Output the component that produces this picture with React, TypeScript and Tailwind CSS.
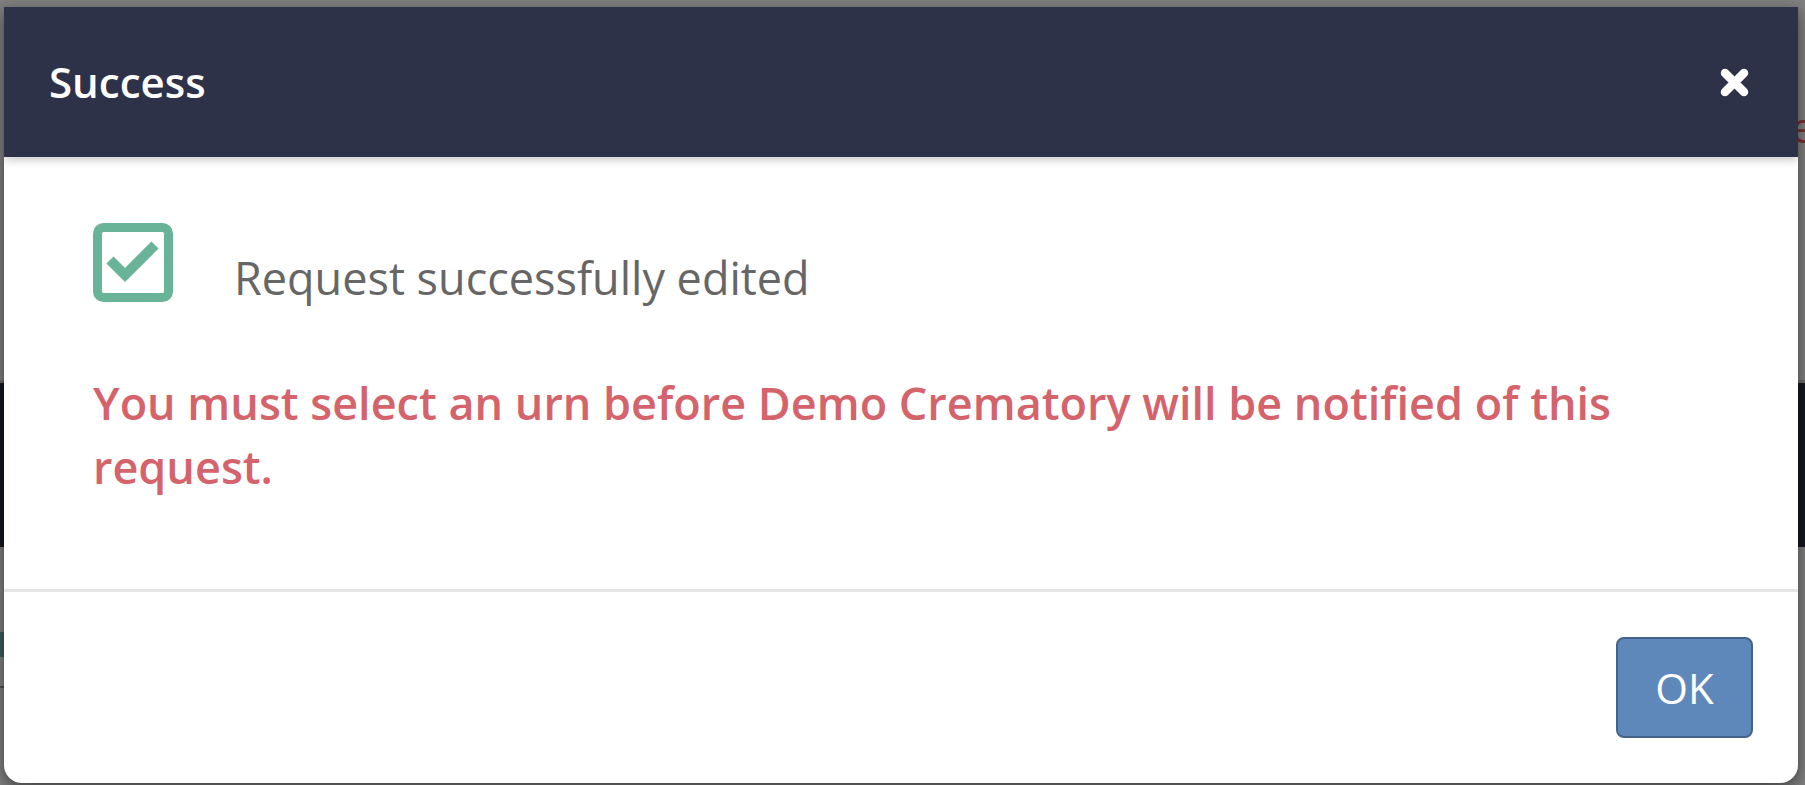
import React from "react";

const font = { fontFamily: '"Open Sans", "Noto Sans", sans-serif' };

const CheckSquare: React.FC = () => (
  <svg width="80" height="80" viewBox="0 0 80 80" className="shrink-0">
    <rect x="4.5" y="4.5" width="71" height="70" rx="6" fill="none" stroke="#69b398" strokeWidth="9" />
    <polyline points="17,37 32,52 62,22" fill="none" stroke="#69b398" strokeWidth="10" strokeLinejoin="miter" />
  </svg>
);

const CloseIcon: React.FC = () => (
  <svg width="31" height="31" viewBox="0 0 31 31">
    <path d="M6 6 L25 25 M25 6 L6 25" stroke="#fff" strokeWidth="8.5" strokeLinecap="round" />
  </svg>
);

const App: React.FC = () => {
  return (
    <div className="relative w-[1805px] h-[785px] bg-[#7f7f7f] overflow-hidden" style={font}>
      {/* dimmed page behind the modal */}
      <div className="absolute left-0 top-[380px] w-full h-[3px] bg-[#6c6c6c]" />
      <div className="absolute left-0 top-[383px] w-full h-[164px] bg-[#15171f]" />
      <div className="absolute left-0 top-[632px] w-[4px] h-[25px] bg-[#3e5e5f]" />
      <div className="absolute left-0 top-[686px] w-[4px] h-[2px] bg-[#4e4e4e]" />
      <div className="absolute left-[1791px] top-[97px] text-[42px] leading-[60px] text-[#7b2f2f]" aria-hidden="true">e</div>

      {/* modal */}
      <div className="absolute left-[4px] top-[7px] w-[1794px] h-[776px] bg-white rounded-b-[18px] shadow-[0_5px_15px_rgba(0,0,0,0.5)] flex flex-col overflow-hidden">
        <div className="relative z-10 h-[150px] bg-[#2e3249] px-[45px] flex items-center justify-between shadow-[0_4px_8px_rgba(0,0,0,0.18)]">
          <h4 className="text-[42px] leading-[60px] font-semibold text-white">Success</h4>
          <button className="mr-[3px] flex items-center">
            <CloseIcon />
          </button>
        </div>

        <div className="h-[432px] px-[89px] pt-[66px]">
          <div className="flex items-start gap-[61px]">
            <CheckSquare />
            <span className="mt-[24px] text-[45px] leading-[61px] text-[#666666]">Request successfully edited</span>
          </div>
          <p className="mt-[63px] text-[45px] leading-[64px] font-semibold text-[#d4636b]">
            You must select an urn before Demo Crematory will be notified of this request.
          </p>
        </div>

        <div className="border-t-[3px] border-[#e5e5e5] p-[45px] flex justify-end">
          <button className="w-[137px] h-[101px] rounded-[8px] bg-[#5f88ba] border-2 border-[#45628b] text-white text-[42px] leading-none">
            OK
          </button>
        </div>
      </div>
    </div>
  );
};

export default App;
